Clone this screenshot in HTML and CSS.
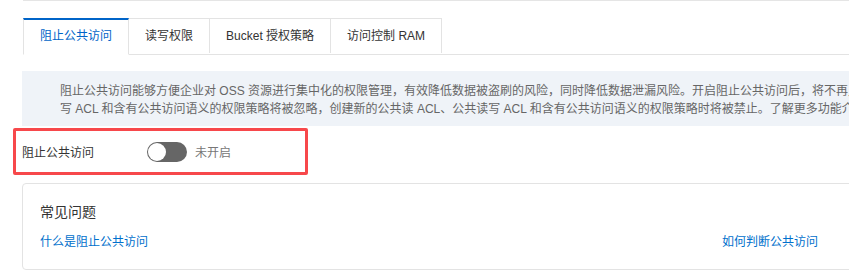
FILE: index.html
```html
<!DOCTYPE html>
<html lang="zh-CN">
<head>
    <meta charset="UTF-8">
    <meta name="viewport" content="width=device-width, initial-scale=1.0">
    <title>阻止公共访问</title>
    <link rel="stylesheet" href="styles.css">
</head>
<body>
    <div class="page">
        <div class="top-rule"></div>
        <div class="tabs">
            <div class="tab active">阻止公共访问</div>
            <div class="tab">读写权限</div>
            <div class="tab">Bucket 授权策略</div>
            <div class="tab">访问控制 RAM</div>
        </div>
        <div class="notice">
            阻止公共访问能够方便企业对 OSS 资源进行集中化的权限管理，有效降低数据被盗刷的风险，同时降低数据泄漏风险。开启阻止公共访问后，将不再允许新建公共访问，已有的公共读、公共读<br>写 ACL 和含有公共访问语义的权限策略将被忽略，创建新的公共读 ACL、公共读写 ACL 和含有公共访问语义的权限策略时将被禁止。了解更多功能介绍
        </div>
        <div class="form-row">
            <span class="form-label">阻止公共访问</span>
            <span class="switch"><span class="knob"></span></span>
            <span class="switch-text">未开启</span>
        </div>
        <div class="faq">
            <div class="faq-title">常见问题</div>
            <div class="faq-links">
                <a class="faq-link" href="#">什么是阻止公共访问</a>
                <a class="faq-link" href="#">如何判断公共访问</a>
            </div>
        </div>
    </div>
</body>
</html>
```

FILE: styles.css
```css
body {
    margin: 0;
    font-family: "Liberation Sans", "Noto Sans CJK SC", sans-serif;
    font-size: 12px;
    color: #333;
    background-color: #fff;
    overflow: hidden;
}
.page {
    width: 1600px;
    padding-left: 22px;
}
.top-rule {
    margin-left: 1px;
    border-bottom: 1px solid #e5e5e5;
}
.tabs {
    display: flex;
    margin-top: 17px;
    margin-left: 1px;
    border-bottom: 1px solid #e3e3e3;
}
.tab {
    height: 34px;
    line-height: 34px;
    padding: 0 16px;
    border: 1px solid #e3e3e3;
    border-left: none;
    border-bottom: none;
    margin-bottom: -1px;
    background-color: #fff;
    color: #333;
}
.tab.active {
    border-left: 1px solid #e3e3e3;
    border-top: 2px solid #0064c8;
    height: 34px;
    line-height: 33px;
    color: #0064c8;
    border-bottom: 1px solid #fff;
}
.notice {
    margin-top: 16px;
    padding: 11px 0 8px 38px;
    background-color: #eff3f8;
    color: #666;
    line-height: 18px;
    white-space: nowrap;
}
.form-row {
    display: flex;
    align-items: center;
    width: 283px;
    height: 41px;
    margin-top: 2px;
    margin-left: -9px;
    padding-left: 6px;
    border: 3px solid #f7484b;
    border-radius: 2px;
}
.form-label {
    width: 125px;
    color: #333;
}
.switch {
    display: flex;
    align-items: center;
    width: 40px;
    height: 20px;
    border-radius: 10px;
    background-color: #666;
}
.knob {
    width: 18px;
    height: 18px;
    margin-left: 1px;
    border-radius: 50%;
    background-color: #fff;
}
.switch-text {
    margin-left: 8px;
    color: #777;
}
.faq {
    margin-top: 8px;
    padding: 17px 17px 17px;
    border: 1px solid #e3e3e3;
    border-radius: 4px;
}
.faq-title {
    font-size: 14px;
    line-height: 22px;
    color: #333;
}
.faq-links {
    display: grid;
    grid-template-columns: 682px 682px;
    margin-top: 9px;
    line-height: 20px;
}
.faq-link {
    color: #0070cc;
    text-decoration: none;
}
```
